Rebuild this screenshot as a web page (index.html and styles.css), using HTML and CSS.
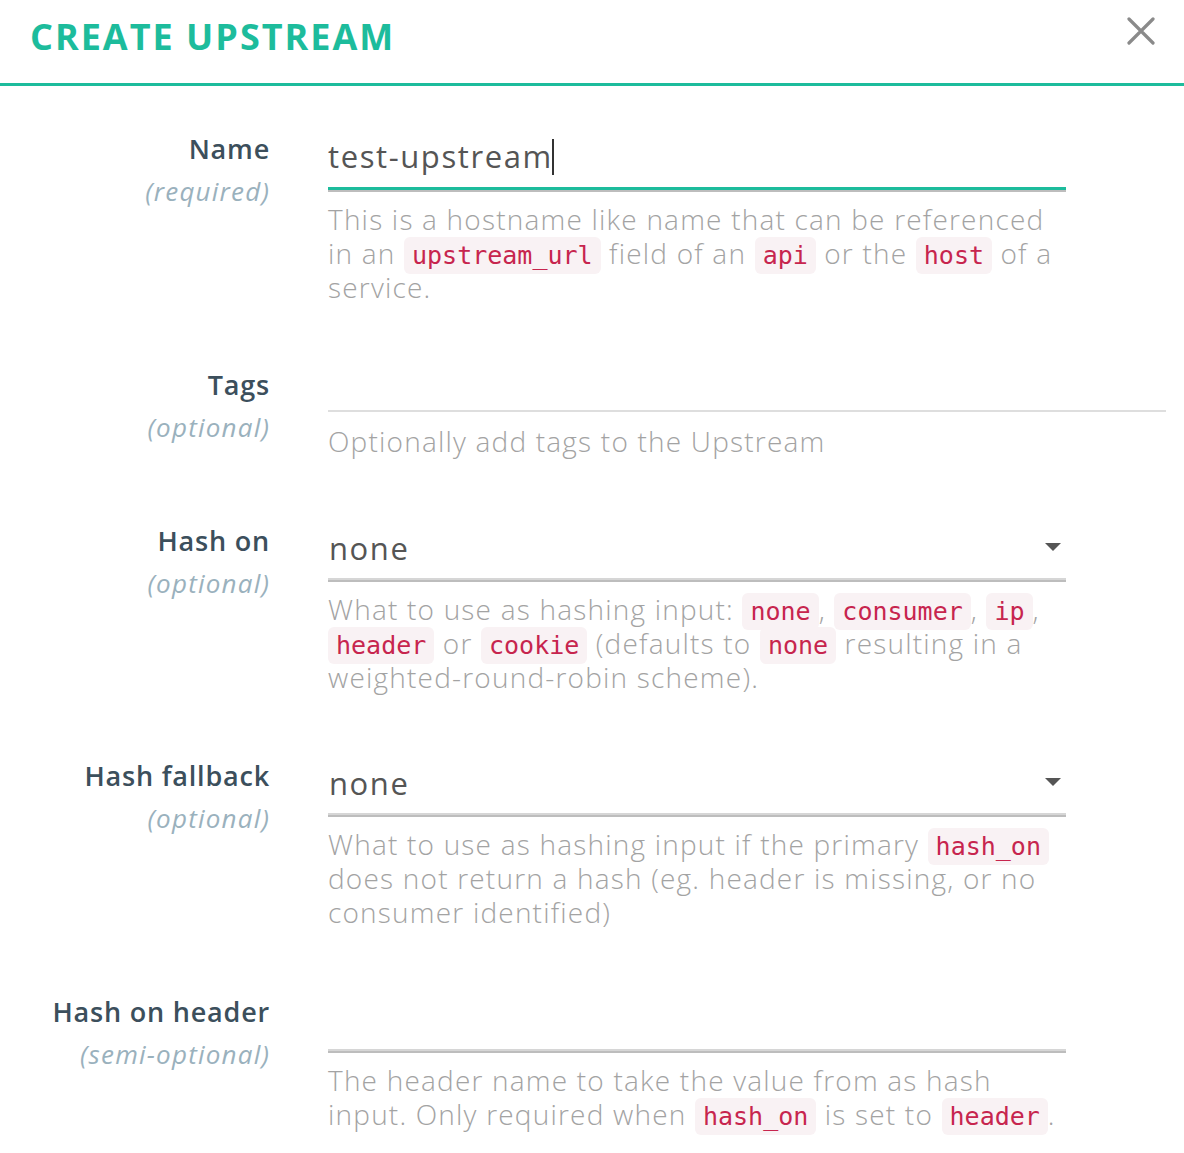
FILE: index.html
```html
<!DOCTYPE html>
<html lang="en">
<head>
<meta charset="utf-8">
<title>Create Upstream</title>
<link rel="stylesheet" href="styles.css">
</head>
<body>
<div class="modal">
  <header class="modal-header">
    <h1 class="modal-title">CREATE UPSTREAM</h1>
    <button class="close" aria-label="Close">
      <svg width="28" height="28" viewBox="0 0 28 28"><path d="M2 2 L26 26 M26 2 L2 26" stroke="#8a8a8a" stroke-width="3.2" stroke-linecap="round" fill="none"/></svg>
    </button>
  </header>

  <div class="form">
    <div class="row">
      <div class="label"><div class="name">Name</div><div class="req">(required)</div></div>
      <div class="field">
        <div class="input focused">test-upstream<span class="caret"></span></div>
        <p class="help">This is a hostname like name that can be referenced in an <code>upstream_url</code> field of an <code>api</code> or the <code>host</code> of a service.</p>
      </div>
    </div>

    <div class="row">
      <div class="label"><div class="name">Tags</div><div class="req">(optional)</div></div>
      <div class="field wide">
        <div class="input tags"></div>
        <p class="help tags-help">Optionally add tags to the Upstream</p>
      </div>
    </div>

    <div class="row row-hash">
      <div class="label"><div class="name">Hash on</div><div class="req">(optional)</div></div>
      <div class="field">
        <div class="input select">none<span class="arrow"></span></div>
        <p class="help">What to use as hashing input: <code>none</code>, <code>consumer</code>, <code>ip</code>, <code>header</code> or <code>cookie</code> (defaults to <code>none</code> resulting in a weighted-round-robin scheme).</p>
      </div>
    </div>

    <div class="row row-fallback">
      <div class="label"><div class="name">Hash fallback</div><div class="req">(optional)</div></div>
      <div class="field">
        <div class="input select">none<span class="arrow"></span></div>
        <p class="help">What to use as hashing input if the primary <code>hash_on</code> does not return a hash (eg. header is missing, or no consumer identified)</p>
      </div>
    </div>

    <div class="row">
      <div class="label"><div class="name">Hash on header</div><div class="req">(semi-optional)</div></div>
      <div class="field">
        <div class="input"></div>
        <p class="help">The header name to take the value from as hash input. Only required when <code>hash_on</code> is set to <code>header</code>.</p>
      </div>
    </div>
  </div>
</div>
</body>
</html>
```

FILE: styles.css
```css
* { box-sizing: border-box; }
html, body { margin: 0; padding: 0; background: #fff; }
body { font-family: "Open Sans", "Noto Sans", sans-serif; }

.modal { width: 1184px; }

.modal-header {
  display: flex;
  align-items: center;
  justify-content: space-between;
  height: 86px;
  padding: 0 28px 10px 30px;
  border-bottom: 3px solid #1dbc9c;
}
.modal-title {
  margin: 0;
  font-size: 36px;
  font-weight: 700;
  color: #1dbc9c;
  letter-spacing: 2px;
}
.close {
  border: 0;
  background: none;
  padding: 0;
  width: 28px;
  height: 28px;
  margin-top: -12px;
  margin-right: 1px;
}
.close svg { display: block; }

.form { padding-top: 46px; }

.row {
  display: flex;
  margin-bottom: 64px;
}
.row-hash { margin-bottom: 65px; }
.row-fallback { margin-bottom: 66px; }
.label {
  width: 270px;
  flex: none;
  text-align: right;
}
.name {
  font-size: 27px;
  line-height: 34px;
  font-weight: 600;
  color: #3c4f5c;
  letter-spacing: 0.8px;
}
.req {
  margin-top: 8px;
  font-size: 26px;
  line-height: 34px;
  font-style: italic;
  color: #9ab1bd;
  letter-spacing: 1.2px;
}
.field {
  width: 738px;
  margin-left: 58px;
}
.field.wide { width: 838px; }

.input {
  position: relative;
  height: 58px;
  padding-top: 4px;
  font-size: 31px;
  line-height: 40px;
  letter-spacing: 1.6px;
  color: #555;
  border-bottom: 2px solid #bdbdbd;
  box-shadow: inset 0 -2px 0 #d6d6d6;
}
.input.focused {
  height: 60px;
  box-shadow: inset 0 -3px 0 #1dbc9c;
}
.caret {
  display: inline-block;
  width: 2px;
  height: 36px;
  background: #333;
  vertical-align: -7px;
  margin-left: -1px;
}
.input.tags {
  height: 44px;
  border-bottom: 2px solid #dedede;
  box-shadow: none;
}
.input.select { padding-left: 1px; }
.arrow {
  position: absolute;
  right: 5px;
  top: 19px;
  width: 0;
  height: 0;
  border-left: 8px solid transparent;
  border-right: 8px solid transparent;
  border-top: 8px solid #555;
}

.help {
  margin: 10px 0 0;
  font-size: 28px;
  line-height: 34px;
  font-weight: 300;
  letter-spacing: 1.2px;
  color: #a3a3a3;
}
.help.tags-help { margin-top: 12px; margin-bottom: 2px; }
.help code {
  font-family: "DejaVu Sans Mono", monospace;
  font-size: 25px;
  line-height: 20px;
  letter-spacing: 0;
  color: #c7254e;
  background: #f9f2f4;
  border-radius: 6px;
  padding: 4px 8px;
}
```
